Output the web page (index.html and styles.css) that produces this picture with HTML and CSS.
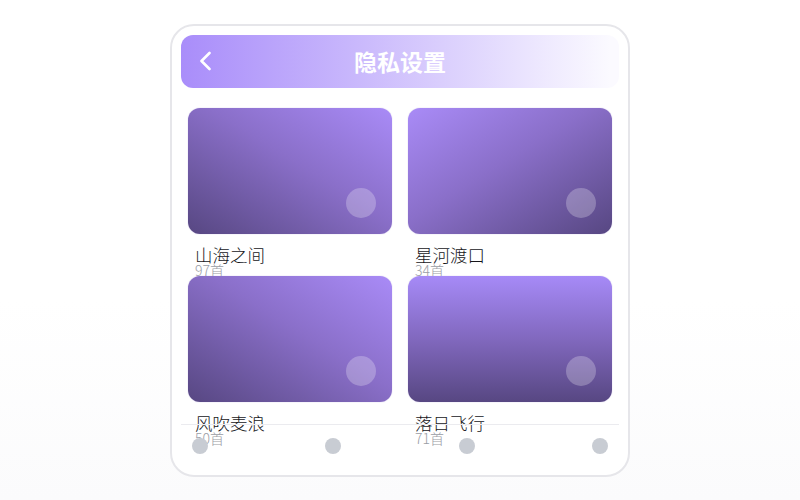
FILE: index.html
```html
<!doctype html>
<html lang="zh">
  <head>
    <meta charset="UTF-8" />
    <title>隐私设置</title>
    <link rel="stylesheet" href="styles.css">
  </head>
  <body>
    <div class="phone">
      <div class="header">
        <span class="back">
          <svg width="12" height="20" viewBox="0 0 12 20">
            <polyline points="10.5,2 2.5,10 10.5,18" fill="none" stroke="#fff" stroke-width="2.6" stroke-linecap="round" stroke-linejoin="round" />
          </svg>
        </span>
        <h1>隐私设置</h1>
        <span></span>
      </div>

      <div class="grid">
        <div class="item">
          <div class="cover up-right"><span class="dot"></span></div>
          <div class="name">山海之间</div>
          <div class="count">97首</div>
        </div>
        <div class="item">
          <div class="cover down-right"><span class="dot"></span></div>
          <div class="name">星河渡口</div>
          <div class="count">34首</div>
        </div>
        <div class="item">
          <div class="cover up-right"><span class="dot"></span></div>
          <div class="name">风吹麦浪</div>
          <div class="count">50首</div>
        </div>
        <div class="item">
          <div class="cover down"><span class="dot"></span></div>
          <div class="name">落日飞行</div>
          <div class="count">71首</div>
        </div>
      </div>

      <div class="tabbar">
        <span class="tab"></span>
        <span class="tab"></span>
        <span class="tab"></span>
        <span class="tab"></span>
      </div>
    </div>
  </body>
</html>
```

FILE: styles.css
```css
  body {
    margin: 0;
    height: 100vh;
    display: flex;
    justify-content: center;
    align-items: center;
    font-family: "Noto Sans CJK SC", "Noto Sans", sans-serif;
    background: linear-gradient(#ffffff 60%, #fbfbfc);
  }

  .phone {
    position: relative;
    box-sizing: border-box;
    width: 460px;
    height: 453px;
    padding: 9px 9px;
    border: 2px solid #e6e6ea;
    border-radius: 24px;
    background: #fff;
    overflow: hidden;
  }

  .header {
    height: 53px;
    border-radius: 12px;
    display: grid;
    grid-template-columns: 40px 1fr 40px;
    align-items: center;
    background: linear-gradient(to right, #a98dfa, #c9b8fc 40%, #fbfaff 98%);
  }

  .back {
    padding-left: 18px;
    display: flex;
  }

  h1 {
    margin: 0;
    text-align: center;
    color: #fff;
    font-size: 23px;
    font-weight: 700;
  }

  .grid {
    margin-top: 20px;
    padding: 0 7px;
    display: grid;
    grid-template-columns: 1fr 1fr;
    grid-auto-rows: 168px;
    column-gap: 16px;
  }

  .item {
    min-width: 0;
  }

  .cover {
    position: relative;
    height: 126px;
    border-radius: 12px;
    box-shadow: 0 0 1px rgba(120, 90, 200, 0.6);
  }

  .up-right {
    background: linear-gradient(to top right, #574782, #8a6fc9 55%, #a98bf7);
  }

  .down-right {
    background: linear-gradient(to bottom right, #a98bf7, #8a6fc9 45%, #574782);
  }

  .down {
    background: linear-gradient(to bottom, #a68af7, #8168be 50%, #574782);
  }

  .dot {
    position: absolute;
    right: 16px;
    bottom: 16px;
    width: 30px;
    height: 30px;
    border-radius: 50%;
    background: rgba(255, 255, 255, 0.25);
  }

  .name {
    margin-top: 12px;
    padding-left: 7px;
    font-size: 17.5px;
    font-weight: 300;
    line-height: 17px;
    color: #16161a;
  }

  .count {
    padding-left: 7px;
    font-size: 14px;
    font-weight: 300;
    line-height: 14px;
    color: #9a9da5;
  }

  .tabbar {
    position: absolute;
    left: 9px;
    right: 9px;
    bottom: 0;
    height: 51px;
    box-sizing: border-box;
    border-top: 1px solid #ebebef;
    padding: 13px 11px 0;
    display: flex;
    justify-content: space-between;
    align-items: flex-start;
  }

  .tab {
    width: 16px;
    height: 16px;
    border-radius: 50%;
    background: #c8ccd3;
  }
```
